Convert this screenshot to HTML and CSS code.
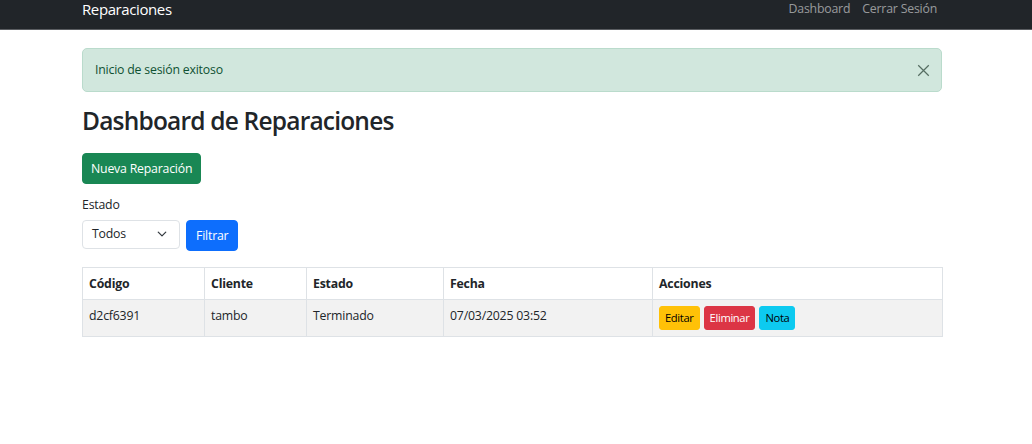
FILE: index.html
```html
<!DOCTYPE html>
<html lang="es">
<head>
<meta charset="utf-8">
<title>Reparaciones</title>
<link rel="stylesheet" href="styles.css">
</head>
<body>
<nav class="navbar">
  <div class="container nav-inner">
    <a class="brand" href="#">Reparaciones</a>
    <div class="nav-links">
      <a href="#">Dashboard</a>
      <a href="#">Cerrar Sesión</a>
    </div>
  </div>
</nav>
<main class="container">
  <div class="alert">
    <span>Inicio de sesión exitoso</span>
    <button class="close" aria-label="Cerrar">
      <svg width="13" height="13" viewBox="0 0 16 16"><path d="M1.5 1.5 14.5 14.5M14.5 1.5 1.5 14.5" stroke="#566e62" stroke-width="1.5" fill="none"/></svg>
    </button>
  </div>
  <h2 class="title">Dashboard de Reparaciones</h2>
  <button class="btn btn-success">Nueva Reparación</button>
  <form class="filter">
    <label class="label">Estado</label>
    <div class="filter-row">
      <div class="select">
        <span>Todos</span>
        <svg width="10" height="10" viewBox="0 0 16 16"><path d="M2 5l6 6 6-6" stroke="#343a40" stroke-width="2" fill="none" stroke-linecap="round" stroke-linejoin="round"/></svg>
      </div>
      <button type="button" class="btn btn-primary">Filtrar</button>
    </div>
  </form>
  <table class="table">
    <colgroup>
      <col class="c1"><col class="c2"><col class="c3"><col class="c4"><col class="c5">
    </colgroup>
    <thead>
      <tr><th>Código</th><th>Cliente</th><th>Estado</th><th>Fecha</th><th>Acciones</th></tr>
    </thead>
    <tbody>
      <tr>
        <td>d2cf6391</td>
        <td>tambo</td>
        <td>Terminado</td>
        <td>07/03/2025 03:52</td>
        <td>
          <div class="actions">
            <button class="btn-sm btn-warning">Editar</button>
            <button class="btn-sm btn-danger">Eliminar</button>
            <button class="btn-sm btn-info">Nota</button>
          </div>
        </td>
      </tr>
    </tbody>
  </table>
</main>
</body>
</html>
```
FILE: styles.css
```css
* { box-sizing: border-box; }
html, body { margin: 0; }
body {
  font-family: "Open Sans", "Noto Sans", sans-serif;
  font-size: 12.3px;
  letter-spacing: -0.2px;
  line-height: 1.5;
  color: #212529;
  background: #fff;
}
.container {
  width: 860px;
  margin-left: 82px;
}
.navbar {
  background: #212529;
  height: 30px;
  border-bottom: 1px solid #5a5d61;
}
.nav-inner {
  display: flex;
  justify-content: space-between;
  align-items: flex-start;
}
.brand {
  color: #fff;
  font-size: 15px;
  letter-spacing: -0.4px;
  text-decoration: none;
  line-height: 20px;
  margin-top: -1px;
}
.nav-links {
  display: flex;
  gap: 12px;
  margin-right: 5px;
}
.nav-links a {
  color: rgba(255,255,255,0.55);
  text-decoration: none;
  font-size: 12.3px;
  line-height: 17px;
}
.alert {
  margin-top: 18px;
  height: 44px;
  background: #d1e7dd;
  border: 1px solid #badbcc;
  border-radius: 5px;
  color: #0f5132;
  display: flex;
  align-items: center;
  justify-content: space-between;
  padding: 0 10px 0 12px;
}
.close {
  background: none;
  border: 0;
  padding: 0;
  width: 16px;
  height: 16px;
  display: flex;
  align-items: center;
  justify-content: center;
}
.title {
  font-size: 24.5px;
  letter-spacing: -0.8px;
  font-weight: 600;
  line-height: 1.2;
  margin: 14px 0 18px;
}
.btn {
  font-family: inherit;
  font-size: 12.3px;
  letter-spacing: -0.2px;
  line-height: 19px;
  padding: 5px 9px;
  border-radius: 4px;
  border: 1px solid transparent;
  color: #fff;
}
.btn-success { background: #198754; border-color: #198754; padding: 5px 8px; }
.btn-primary { background: #0d6efd; border-color: #0d6efd; }
.filter { margin-top: 12px; }
.label { display: block; margin-bottom: 5px; }
.filter-row { display: flex; gap: 6px; }
.select {
  width: 98px;
  height: 29px;
  border: 1px solid #dee2e6;
  border-radius: 4px;
  display: flex;
  align-items: center;
  justify-content: space-between;
  padding: 0 12px 0 9px;
}
.table {
  margin-top: 16px;
  width: 860px;
  border-collapse: collapse;
  table-layout: fixed;
  border: 1px solid #dee2e6;
}
.c1 { width: 122px; }
.c2 { width: 102px; }
.c3 { width: 137px; }
.c4 { width: 209px; }
.c5 { width: 290px; }
th, td {
  border: 1px solid #dee2e6;
  text-align: left;
  padding: 0 6px;
  vertical-align: middle;
}
th { font-weight: 700; height: 32px; padding-top: 1px; }
tbody tr { background: #f2f2f2; }
td { height: 37px; padding-bottom: 3px; }
.actions { display: flex; gap: 4px; margin-top: 3px; }
.btn-sm {
  font-family: inherit;
  font-size: 11.2px;
  letter-spacing: -0.35px;
  line-height: 16px;
  padding: 3px 5px;
  height: 24px;
  border-radius: 3px;
  border: 1px solid transparent;
}
.btn-warning { background: #ffc107; border-color: #ffc107; color: #000; }
.btn-danger { background: #dc3545; border-color: #dc3545; color: #fff; }
.btn-info { background: #0dcaf0; border-color: #0dcaf0; color: #000; }
```
